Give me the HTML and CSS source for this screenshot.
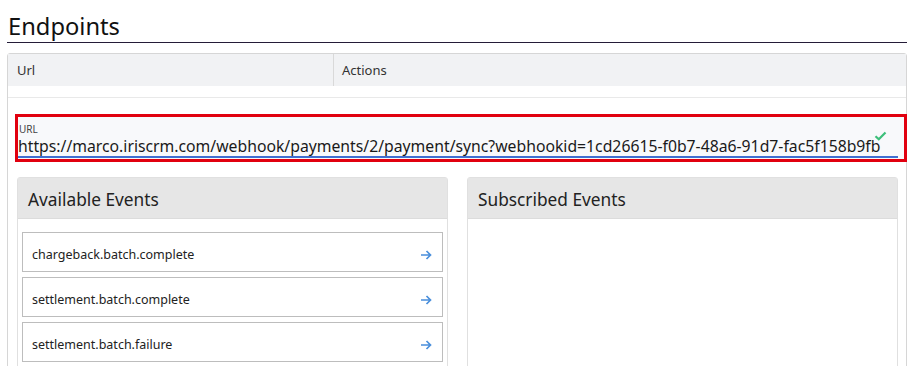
FILE: index.html
```html
<!DOCTYPE html>
<html lang="en">
<head>
<meta charset="utf-8">
<title>Endpoints</title>
<link rel="stylesheet" href="styles.css">
</head>
<body>
<div class="page">
  <h1 class="title">Endpoints</h1>
  <div class="panel">
    <div class="thead">
      <div class="th th-url">Url</div>
      <div class="th th-actions">Actions</div>
    </div>
    <div class="spacer-row"></div>
    <div class="body">
      <div class="url-box">
        <div class="url-label">URL</div>
        <div class="url-value">https://marco.iriscrm.com/webhook/payments/2/payment/sync?webhookid=1cd26615-f0b7-48a6-91d7-fac5f158b9fb</div>
        <svg class="check" width="13" height="10" viewBox="0 0 13 10"><path d="M1.5 5.2 L4.8 8.3 L11.5 1.5" fill="none" stroke="#3dbf7a" stroke-width="2.2"/></svg>
      </div>
      <div class="events">
        <div class="ev-panel">
          <div class="ev-head">Available Events</div>
          <div class="ev-body">
            <div class="ev-row"><span>chargeback.batch.complete</span><svg class="arrow" width="12" height="10" viewBox="0 0 12 10"><path d="M1 5 H10.5 M6.5 1 L10.5 5 L6.5 9" fill="none" stroke="#4a8fdb" stroke-width="1.7"/></svg></div>
            <div class="ev-row"><span>settlement.batch.complete</span><svg class="arrow" width="12" height="10" viewBox="0 0 12 10"><path d="M1 5 H10.5 M6.5 1 L10.5 5 L6.5 9" fill="none" stroke="#4a8fdb" stroke-width="1.7"/></svg></div>
            <div class="ev-row"><span>settlement.batch.failure</span><svg class="arrow" width="12" height="10" viewBox="0 0 12 10"><path d="M1 5 H10.5 M6.5 1 L10.5 5 L6.5 9" fill="none" stroke="#4a8fdb" stroke-width="1.7"/></svg></div>
          </div>
        </div>
        <div class="ev-panel">
          <div class="ev-head">Subscribed Events</div>
          <div class="ev-body"></div>
        </div>
      </div>
    </div>
  </div>
</div>
</body>
</html>
```
FILE: styles.css
```css
* { box-sizing: border-box; }
html, body { margin: 0; padding: 0; background: #fff; }
body { font-family: "Noto Sans", "Open Sans", sans-serif; color: #222; overflow: hidden; height: 366px; }
.page { margin-left: 7px; width: 900px; }
.title {
  margin: 0;
  padding: 11px 0 0 1px;
  font-size: 23.7px;
  font-weight: 400;
  line-height: 31px;
  color: #111;
  border-bottom: 1px solid #241c38;
}
.panel {
  margin-top: 10px;
  border: 1px solid #d6d6d6;
  border-radius: 3px;
  height: 400px;
}
.thead { display: flex; height: 32px; background: #f1f2f4; }
.th { font-size: 13px; line-height: 32px; color: #333; padding-left: 9px; }
.th-url { width: 326px; border-right: 1px solid #d9d9d9; }
.th-actions { flex: 1; padding-left: 8px; }
.spacer-row { height: 12px; border-bottom: 1px solid #e9e9e9; }
.body { padding-top: 16px; }
.url-box {
  position: relative;
  margin: 0 -1px 0 7px;
  height: 48px;
  border: 3px solid #e1000f;
  background: #f8f9fb;
  padding: 7px 6px 0 0;
}
.url-label { font-size: 10px; line-height: 10px; margin-bottom: 2px; color: #444; padding-left: 1px; }
.url-value {
  font-size: 15.75px;
  line-height: 20px;
  color: #1a1a1a;
  white-space: nowrap;
  border-bottom: 2px solid #3f6fd1;
  overflow: hidden;
}
.check { position: absolute; right: 17px; top: 14px; }
.events { display: flex; gap: 19px; margin: 15px 0 0 9px; }
.ev-panel { width: 431px; border: 1px solid #e0e0e0; border-radius: 3px; height: 220px; }
.ev-head {
  height: 41px;
  background: #e6e6e6;
  font-size: 17.3px;
  padding: 3px 0 0 10px;
  line-height: 38px;
  color: #222;
  border-bottom: 1px solid #dcdcdc;
}
.ev-body { padding: 13px 4px 0; display: flex; flex-direction: column; gap: 5px; }
.ev-row {
  height: 40px;
  border: 1px solid #bdbdbd;
  display: flex;
  align-items: center;
  justify-content: space-between;
  padding: 5px 10px 0 9px;
  font-size: 12.5px;
  color: #222;
}
.arrow { display: block; }
```
